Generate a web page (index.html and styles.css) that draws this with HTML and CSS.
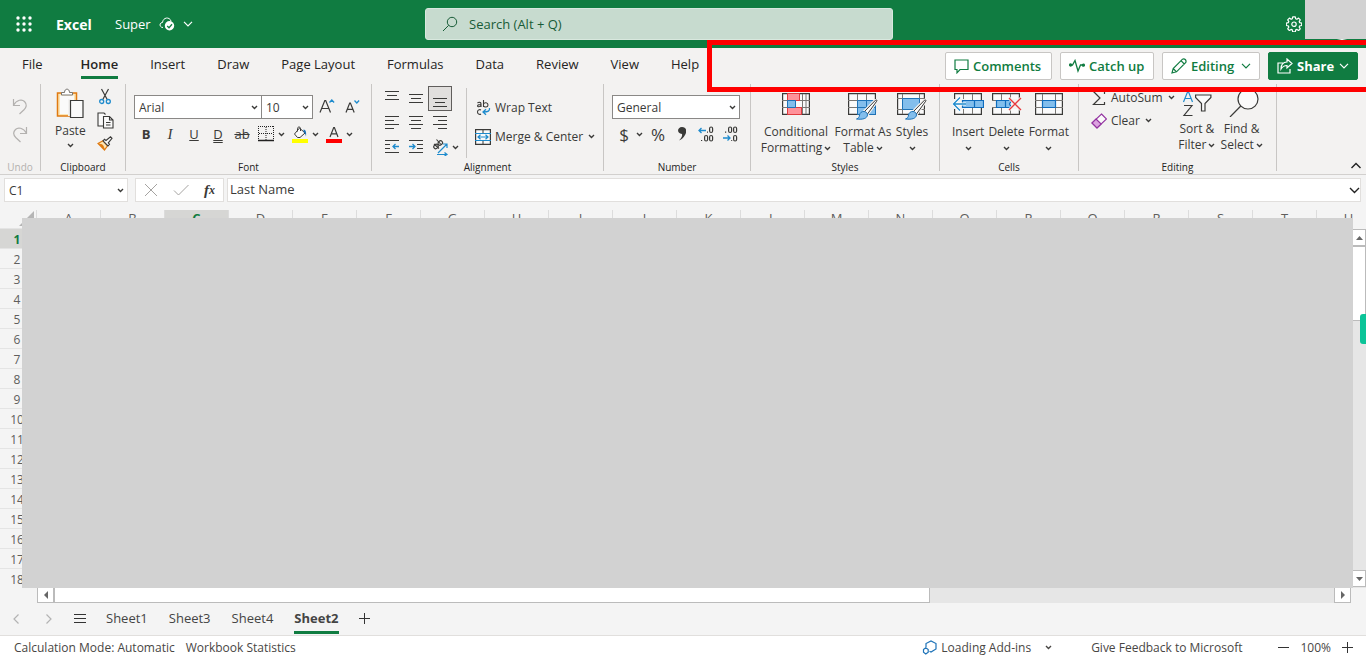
FILE: index.html
```html
<!DOCTYPE html>
<html lang="en">
<head>
<meta charset="utf-8">
<title>Super - Excel</title>
<link rel="stylesheet" href="styles.css">
</head>
<body>
<svg class="defs" aria-hidden="true">
  <symbol id="chev" viewBox="0 0 7 5"><path d="M1 1l2.5 2.5L6 1" fill="none" stroke="currentColor" stroke-width="1.4"/></symbol>
  <symbol id="chev-lg" viewBox="0 0 10 6"><path d="M1 .8l4 4 4-4" fill="none" stroke="currentColor" stroke-width="1.2"/></symbol>
  <symbol id="brush" viewBox="0 0 22 21"><path d="M19.5 1.2c1-.8 1.800 0 1.200 1L11.500 15l-3-2.500z" fill="#fff" stroke="#f3f2f1" stroke-width="3"/><path d="M19.500 1.200c1-.8 1.800 0 1.200 1L11.500 15l-3-2.500z" fill="#fafafa" stroke="#3a3a38"/><path d="M8 12.500c2 .2 3.500 1.600 3.500 3.500-.5 3.500-4.500 4.800-11 4 2.500-1 2.800-2 3-4 .3-2 2-3.700 4.500-3.500z" fill="#83beec" stroke="#1e73b8"/></symbol>
</svg>
<div class="app">
  <header class="topbar">
    <div class="brand">
      <button class="plain waffle" aria-label="App launcher"><svg width="16" height="16" viewBox="0 0 16 16" fill="#fff"><circle cx="2" cy="2" r="1.700"/><circle cx="8" cy="2" r="1.700"/><circle cx="14" cy="2" r="1.700"/><circle cx="2" cy="8" r="1.700"/><circle cx="8" cy="8" r="1.700"/><circle cx="14" cy="8" r="1.700"/><circle cx="2" cy="14" r="1.700"/><circle cx="8" cy="14" r="1.700"/><circle cx="14" cy="14" r="1.700"/></svg></button>
      <a class="app-name" href="#">Excel</a>
      <button class="plain doc-name"><span>Super</span>
        <svg width="16" height="14" viewBox="0 0 16 14"><path d="M4 10.500C.2 10.500 0 5.500 3.500 5.500 4 .2 10.500-.5 12 4" fill="none" stroke="#fff"/><circle cx="10.500" cy="8.800" r="4.700" fill="#fff"/><path d="M8.200 9l1.800 1.700 3-3.400" fill="none" stroke="#107c41" stroke-width="1.300"/></svg>
        <svg width="10" height="6"><use href="#chev-lg"/></svg></button>
    </div>
    <label class="search"><svg width="16" height="16" viewBox="0 0 16 16" fill="none" stroke="#185c37"><circle cx="10" cy="6" r="4.700"/><path d="M6.700 9.300L1 15"/></svg><input type="text" placeholder="Search (Alt + Q)" aria-label="Search"></label>
    <button class="plain gear" aria-label="Settings"><svg width="16" height="16" viewBox="0 0 16 16" fill="none" stroke="#fff" stroke-width="1.200" stroke-linejoin="round"><path d="M6.700.8h2.600l.4 2 1.200.5 1.700-1.200 1.700 1.800-1.100 1.700.5 1.100 2 .4v2.400l-2 .4-.5 1.200 1.100 1.700-1.700 1.700-1.700-1.100-1.200.5-.4 2H6.700l-.4-2-1.200-.5-1.700 1.100-1.700-1.700 1.100-1.700-.5-1.200-2-.4V7.100l2-.4.500-1.100-1.100-1.700 1.700-1.800 1.700 1.200 1.200-.5z"/><circle cx="8" cy="8.200" r="2.200"/></svg></button>
    <div class="avatar"></div>
    <div class="account-cover"></div>
  </header>

  <nav class="menu">
    <div class="tabs">
      <a href="#" class="file">File</a><a href="#" class="active">Home</a><a href="#">Insert</a><a href="#">Draw</a><a href="#">Page Layout</a><a href="#">Formulas</a><a href="#">Data</a><a href="#">Review</a><a href="#">View</a><a href="#">Help</a>
    </div>
    <div class="actions">
      <button class="w-comments"><svg width="15" height="15" viewBox="0 0 15 15" fill="none" stroke="currentColor" stroke-width="1.200"><path d="M1 1h13v9.500H6L3 13.800v-3.300H1z"/></svg>Comments</button>
      <button class="w-catch"><svg width="16" height="14" viewBox="0 0 16 14" fill="none" stroke="currentColor" stroke-width="1.300"><path d="M1.500 6h2L6 1.500 9 12l2.500-6H14"/><circle cx="1.600" cy="6" r="1" fill="currentColor"/><circle cx="14.400" cy="6.200" r="1" fill="currentColor"/></svg>Catch up</button>
      <button class="w-editing"><svg width="16" height="16" viewBox="0 0 16 16" fill="none" stroke="currentColor" stroke-width="1.200"><path d="M1 15l1.200-4.500L11.500 1.200c2-1.200 4.200 1 3.300 3.300L5.500 13.800zM10 2.700L13.300 6M2.200 10.500l3.300 3.300"/></svg>Editing<svg class="end" width="10" height="6"><use href="#chev-lg"/></svg></button>
      <button class="w-share"><svg width="16" height="16" viewBox="0 0 16 16" fill="none" stroke="currentColor" stroke-width="1.200"><path d="M6 5H1v10h12v-4"/><path d="M10 1l5 4.500-5 4.500V7.500c-3 0-4.500 1-6 3.500 0-4 2-7 6-7z"/></svg>Share<svg class="end" width="10" height="6"><use href="#chev-lg"/></svg></button>
    </div>
    <div class="highlight"></div>
  </nav>

  <section class="ribbon" aria-label="Home ribbon">
    <div class="group g-undo">
      <div class="body stack">
        <button class="plain" aria-label="Undo"><svg width="16" height="17" viewBox="0 0 16 17" fill="none" stroke="#b3b1af" stroke-width="1.200"><path d="M1.500 1v6.500H8M1.500 7.300C5 1.500 10 1 12.500 3.500c3 3 1.800 6-.5 8.300L7.500 16"/></svg></button>
        <button class="plain" aria-label="Redo"><svg width="16" height="17" viewBox="0 0 16 17" fill="none" stroke="#b3b1af" stroke-width="1.200"><path d="M14.500 1v6.500H8M14.500 7.300C11 1.500 6 1 3.500 3.500c-3 3-1.800 6 .5 8.300L8.500 16"/></svg></button>
      </div>
      <h2>Undo</h2>
    </div>
    <div class="group g-clip">
      <div class="body">
        <button class="plain big paste"><svg width="28" height="31" viewBox="0 0 28 31"><path d="M1.500 5h19v23h-19z" fill="#fce5b5" stroke="#e07a10" stroke-width="1.500"/><path d="M4 7.500h14V26H4z" fill="#fafafa"/><path d="M5.500 7V4.500h3C8.500 0 13.500 0 13.500 4.500h3V7z" fill="#fff" stroke="#797774"/><path d="M12 11h3v17h-3z" fill="#f3f2f1"/><path d="M14.500 12.500h12.500v17H14.500z" fill="#fafafa" stroke="#3a3a38" stroke-width="1.200"/></svg><span>Paste</span><svg width="7" height="5"><use href="#chev"/></svg></button>
        <div class="stack tools">
          <button class="plain" aria-label="Cut"><svg width="16" height="17" viewBox="0 0 16 17" fill="none"><path d="M4.500 1l6 11M11.500 1l-6 11" stroke="#3a3a38" stroke-width="1.200"/><circle cx="4.700" cy="13.500" r="2" stroke="#1e8bcd" stroke-width="1.300"/><circle cx="11.300" cy="13.500" r="2" stroke="#1e8bcd" stroke-width="1.300"/></svg></button>
          <button class="plain" aria-label="Copy"><svg width="17" height="17" viewBox="0 0 17 17" fill="#fafafa" stroke="#3a3a38" stroke-width="1.100"><path d="M6 14H1V1h6l1.500 1.500"/><path d="M6.500 4.500h6l3.500 3.500v8H6.500zM12.500 4.500V8H16M9 10.500h4.500M9 13h4.500"/></svg></button>
          <button class="plain" aria-label="Format painter"><svg width="16" height="15" viewBox="0 0 16 15"><path d="M1 7.500l5-2.700 4.500 5L7.500 14z" fill="#fce5b5" stroke="#e07a10" stroke-width="1.200"/><path d="M2 8l3.500 1 2 4.500z" fill="#e07a10" stroke="#e07a10"/><path d="M6 4.800l1.500-1.500L9 4.500 13.500.8l1.500 1.500-3.700 4.500 1.200 1.500L11 10z" fill="#fafafa" stroke="#3a3a38" stroke-width="1.100"/></svg></button>
        </div>
      </div>
      <h2>Clipboard</h2>
    </div>
    <div class="group g-font">
      <div class="body stack">
        <div class="row fields">
          <span class="combo f-name"><select aria-label="Font name"><option>Arial</option></select><svg width="7" height="5"><use href="#chev"/></svg></span><span class="combo f-size"><select aria-label="Font size"><option>10</option></select><svg width="7" height="5"><use href="#chev"/></svg></span>
          <button class="plain grow" aria-label="Increase font size"><svg width="16" height="18" viewBox="0 0 16 18" fill="none"><path d="M1 14.500L5.800 2.500h.9l4.800 12M2.700 10.500h7" stroke="#3a3a38" stroke-width="1.200"/><path d="M10.500 4.500L12.800 2l2.300 2.500" stroke="#1e8bcd" stroke-width="1.300"/></svg></button>
          <button class="plain" aria-label="Decrease font size"><svg width="16" height="18" viewBox="0 0 16 18" fill="none"><path d="M2 14.500L5.700 5h.7l3.800 9.500M3.300 11.300h5.500" stroke="#3a3a38" stroke-width="1.200"/><path d="M10.500 2.500L12.800 5l2.300-2.500" stroke="#1e8bcd" stroke-width="1.300"/></svg></button>
        </div>
        <div class="row styles">
          <button class="plain glyph"><b>B</b></button><button class="plain glyph"><i>I</i></button><button class="plain glyph"><u>U</u></button><button class="plain glyph"><span class="dbl">D</span></button><button class="plain glyph"><s>ab</s></button>
          <button class="plain glyph" aria-label="Borders"><svg width="16" height="16" viewBox="0 0 16 16" stroke="#222"><path d="M0 .5h16M.5 0v14M15.500 0v14M8 1v13M1 7.500h14" stroke-dasharray="1 1"/><path d="M0 14.500h16" stroke-width="1.500"/></svg></button><svg width="7" height="5"><use href="#chev"/></svg>
          <button class="plain glyph" aria-label="Fill colour"><svg width="16" height="17" viewBox="0 0 16 17"><path d="M7.500 2L13 7l-5 4.500H5.500L2.500 8z" fill="#fafafa" stroke="#3a3a38"/><path d="M5.500 5.500V2.500c0-2 3-2 3 0V5" fill="none" stroke="#3a3a38"/><path d="M11.500 3.500c2.500 0 3 3 2.500 7-.5-2-1-3.500-2.500-4.500z" fill="#1e73b8"/><path d="M0 13h16v4H0z" fill="#ff0"/></svg></button><svg width="7" height="5"><use href="#chev"/></svg>
          <button class="plain glyph" aria-label="Font colour"><svg width="16" height="17" viewBox="0 0 16 17"><path d="M4 11L7.700 1.500h.7L12 11M5.300 7.800h5.500" fill="none" stroke="#3a3a38" stroke-width="1.200"/><path d="M0 13h16v4H0z" fill="red"/></svg></button><svg width="7" height="5"><use href="#chev"/></svg>
        </div>
      </div>
      <h2>Font</h2>
    </div>
    <div class="group g-align">
      <div class="body">
        <div class="align-grid">
          <button class="plain" aria-label="Top align"><svg width="16" height="16" viewBox="0 0 16 16" stroke="#3a3a38"><path d="M1 .5h14M3 4.500h10M1 8.500h14"/></svg></button>
          <button class="plain" aria-label="Middle align"><svg width="16" height="16" viewBox="0 0 16 16" stroke="#3a3a38"><path d="M1 3.500h14M3 7.500h10M1 11.500h14"/></svg></button>
          <button class="plain pressed" aria-label="Bottom align"><svg width="16" height="16" viewBox="0 0 16 16" stroke="#3a3a38"><path d="M1 7.500h14M3 11.500h10M1 15.500h14"/></svg></button>
          <button class="plain" aria-label="Align left"><svg width="16" height="16" viewBox="0 0 16 16" stroke="#3a3a38"><path d="M1 1.500h14M1 5.500h9M1 9.500h14M1 13.500h9"/></svg></button>
          <button class="plain" aria-label="Centre"><svg width="16" height="16" viewBox="0 0 16 16" stroke="#3a3a38"><path d="M1 1.500h14M3 5.500h10M1 9.500h14M3 13.500h10"/></svg></button>
          <button class="plain" aria-label="Align right"><svg width="16" height="16" viewBox="0 0 16 16" stroke="#3a3a38"><path d="M1 1.500h14M6 5.500h9M1 9.500h14M6 13.500h9"/></svg></button>
          <button class="plain" aria-label="Decrease indent"><svg width="16" height="16" viewBox="0 0 16 16" fill="none"><path d="M1 1.500h14M1 5.500h5M1 9.500h5M1 13.500h14" stroke="#3a3a38"/><path d="M15 7.500H9M11.500 5L9 7.500l2.500 2.500" stroke="#1e8bcd" stroke-width="1.300"/></svg></button>
          <button class="plain" aria-label="Increase indent"><svg width="16" height="16" viewBox="0 0 16 16" fill="none"><path d="M1 1.500h14M9 5.500h6M9 9.500h6M1 13.500h14" stroke="#3a3a38"/><path d="M1 7.500h6M4.500 5L7 7.500 4.500 10" stroke="#1e8bcd" stroke-width="1.300"/></svg></button>
          <button class="plain" aria-label="Orientation"><svg width="17" height="17" viewBox="0 0 17 17" fill="none"><g stroke="#3a3a38" stroke-width="1.100"><ellipse cx="4" cy="7.500" rx="2" ry="2.400" transform="rotate(45 4 7.500)"/><path d="M2 5l5 4.500"/><ellipse cx="8.300" cy="4" rx="2" ry="2.400" transform="rotate(45 8.300 4)"/><path d="M4.500.5l4.500 5"/></g><path d="M6 14L15 5M11 5h4v4M5 15.500h10M12.500 13.500l2.500 2-2.500 1.500" stroke="#1e8bcd" stroke-width="1.200"/></svg></button>
        </div>
        <svg class="orient" width="7" height="5"><use href="#chev"/></svg>
        <div class="stack wrap">
          <button class="plain line"><svg width="16" height="17" viewBox="0 0 16 17" fill="none"><g stroke="#3a3a38" stroke-width="1.100"><path d="M2.500 4c1-1 3.500-1 3.500.7V8M6 5.500C4 5.500 2.500 6 2.500 7S5 8 6 6.500M8.500 1v7M8.500 5c1-2 4.500-1.500 4.500 1s-3.500 2.500-4.500 1M6 11c-1.500-1-3.500 0-3.500 2s2 3 3.500 2"/></g><path d="M14.500 9c.5 3-1.500 4-6 4M11 10.200L8 13l3 2.800" stroke="#1e8bcd" stroke-width="1.300"/></svg>Wrap Text</button>
          <button class="plain line"><svg width="16" height="16" viewBox="0 0 16 16" fill="none"><path d="M.6.600h14.800v14.800H.6z" fill="#fafafa" stroke="#3a3a38" stroke-width="1.200"/><path d="M8 1v3M8 12v3" stroke="#3a3a38"/><path d="M0 4.500h16M0 11.500h16M3 8h10M5.500 5.800L3 8l2.500 2.200M10.500 5.800L13 8l-2.500 2.200" stroke="#1e8bcd" stroke-width="1.200"/></svg>Merge &amp; Center<svg class="after" width="7" height="5"><use href="#chev"/></svg></button>
        </div>
      </div>
      <h2>Alignment</h2>
    </div>
    <div class="group g-number">
      <div class="body stack">
        <div class="row fields"><span class="combo f-num"><select aria-label="Number format"><option>General</option></select><svg width="7" height="5"><use href="#chev"/></svg></span></div>
        <div class="row nums">
          <button class="plain glyph big-glyph">$</button><svg width="7" height="5"><use href="#chev"/></svg><button class="plain glyph big-glyph">%</button>
          <button class="plain glyph" aria-label="Comma style"><svg width="8" height="14" viewBox="0 0 8 14" fill="#3a3a38"><path d="M4 0c5 0 5 5 3 8-1.300 2.500-3 4.500-6 5.500C3.500 11 4.500 9 4 7-1.500 7-1 0 4 0z"/></svg></button>
          <button class="plain glyph" aria-label="Increase decimal"><svg width="16" height="16" viewBox="0 0 16 16" fill="none"><g stroke="#3a3a38" stroke-width="1.200"><rect x="11.600" y="1" width="3" height="5.500" rx="1.500"/><rect x="6.600" y="9.500" width="3" height="5.500" rx="1.500"/><rect x="11.600" y="9.500" width="3" height="5.500" rx="1.500"/><path d="M3 14.500h1.200M9 6.200h1"/></g><path d="M8 4.500H1M3.500 2L1 4.500 3.500 7" stroke="#1e8bcd" stroke-width="1.300"/></svg></button>
          <button class="plain glyph" aria-label="Decrease decimal"><svg width="16" height="16" viewBox="0 0 16 16" fill="none"><g stroke="#3a3a38" stroke-width="1.200"><rect x="6.600" y="1" width="3" height="5.500" rx="1.500"/><rect x="11.600" y="1" width="3" height="5.500" rx="1.500"/><rect x="11.600" y="9.500" width="3" height="5.500" rx="1.500"/><path d="M3 6.200h1.200M9.200 14.500h1"/></g><path d="M1 12h7M5.500 9.500L8 12l-2.500 2.500" stroke="#1e8bcd" stroke-width="1.300"/></svg></button>
        </div>
      </div>
      <h2>Number</h2>
    </div>
    <div class="group g-styles">
      <div class="body">
        <button class="plain big w-cond"><svg width="28" height="28" viewBox="0 0 28 28"><path d="M.6 1.600h26.800v20.800H.6z" fill="#fafafa" stroke="#3a3a38" stroke-width="1.200"/><path d="M0 8.500h28M0 15.500h28M5.500 2v20M20.500 2v20M24 2v20" stroke="#797774"/><path d="M13.500 9h6v6h-6z" fill="#fafafa"/><path d="M5.500 1.500h12v7h-12zM5.500 15.500h14v7h-14z" fill="#ff9199" stroke="#e03a3e"/><path d="M5.500 8.500h8v7h-8z" fill="#83beec" stroke="#1e73b8"/></svg><span>Conditional</span><span>Formatting<svg width="7" height="5"><use href="#chev"/></svg></span></button>
        <button class="plain big w-table"><svg width="32" height="28" viewBox="0 0 32 28"><path d="M1.600 1.600h26.800v20.800H1.600z" fill="#fafafa" stroke="#3a3a38" stroke-width="1.200"/><path d="M1 8.500h28M1 15.500h28M10.500 2v20M19.500 2v20" stroke="#797774"/><path d="M10.500 8.500h18v14h-18zM10.500 15.500h18M19.500 8.500v14" fill="#83beec" stroke="#1e73b8"/><use href="#brush" x="9" y="7" width="22" height="21"/></svg><span>Format As</span><span>Table<svg width="7" height="5"><use href="#chev"/></svg></span></button>
        <button class="plain big w-cell"><svg width="32" height="28" viewBox="0 0 32 28"><path d="M1.600 1.600h26.800v20.800H1.600z" fill="#fafafa" stroke="#3a3a38" stroke-width="1.200"/><path d="M1 6.500h28M1 17.500h28M6.500 2v20M23.500 2v20" stroke="#797774"/><path d="M6.500 6.500h17v11h-17z" fill="#83beec" stroke="#1e73b8"/><use href="#brush" x="9" y="7" width="22" height="21"/></svg><span>Styles</span><span><svg width="7" height="5"><use href="#chev"/></svg></span></button>
      </div>
      <h2>Styles</h2>
    </div>
    <div class="group g-cells">
      <div class="body">
        <button class="plain big"><svg width="32" height="28" viewBox="0 0 32 28"><path d="M2.600 1.600h26.800v20.800H2.600z" fill="#fafafa" stroke="#3a3a38" stroke-width="1.200"/><path d="M11.500 2v20M20.500 2v20M2 8.500h28M2 15.500h28" stroke="#797774"/><path d="M0 7h14v10H0z" fill="#f3f2f1"/><path d="M10.500 8.500h21v7h-21zM22.500 8.500v7" fill="#83beec" stroke="#0f6cbd" stroke-width="1.200"/><path d="M14 12H1.500M8 5.500L1.500 12 8 18.500" fill="none" stroke="#fff" stroke-width="3"/><path d="M14 12H1.500M8 5.500L1.500 12 8 18.500" fill="none" stroke="#1e8bcd" stroke-width="1.300"/></svg><span>Insert</span><span><svg width="7" height="5"><use href="#chev"/></svg></span></button>
        <button class="plain big"><svg width="32" height="28" viewBox="0 0 32 28"><path d="M2.600 1.600h26.800v20.800H2.600z" fill="#fafafa" stroke="#3a3a38" stroke-width="1.200"/><path d="M11.500 2v20M20.500 2v20M2 8.500h28M2 15.500h28" stroke="#797774"/><path d="M0 9h6v6H0zM20 7h12v10H20z" fill="#f3f2f1"/><path d="M6.500 8.500h15l-2 3.500 2 3.500h-15zM15.500 8.500v7" fill="#83beec" stroke="#0f6cbd" stroke-width="1.200"/><path d="M19 6l12 12M31 6L19 18" stroke="#f3f2f1" stroke-width="3"/><path d="M19 6l12 12M31 6L19 18" stroke="#e8383d" stroke-width="1.300"/></svg><span>Delete</span><span><svg width="7" height="5"><use href="#chev"/></svg></span></button>
        <button class="plain big"><svg width="28" height="28" viewBox="0 0 28 28"><path d="M.6 1.600h26.800v20.800H.6z" fill="#fafafa" stroke="#3a3a38" stroke-width="1.200"/><path d="M0 8.500h28M0 15.500h28M7.500 2v20M20.500 2v20" stroke="#797774"/><path d="M7.500 8.500h13v7h-13z" fill="#83beec" stroke="#0f6cbd" stroke-width="1.200"/></svg><span>Format</span><span><svg width="7" height="5"><use href="#chev"/></svg></span></button>
      </div>
      <h2>Cells</h2>
    </div>
    <div class="group g-edit">
      <div class="body">
        <div class="stack sums">
          <button class="plain line"><svg width="16" height="16" viewBox="0 0 16 16" fill="none" stroke="#3a3a38" stroke-width="1.200"><path d="M13.500 4V1.500h-11L9 8l-6.500 6.500h11V12"/></svg>AutoSum<svg class="after" width="7" height="5"><use href="#chev"/></svg></button>
          <button class="plain line"><svg width="16" height="16" viewBox="0 0 16 16" stroke="#9332a0" stroke-width="1.100"><path d="M10.500 1l5 5L6 15 1 10z" fill="#fafafa"/><path d="M5 6l5.200 5L6 15 1 10z" fill="#dca3e0"/></svg>Clear<svg class="after" width="7" height="5"><use href="#chev"/></svg></button>
        </div>
        <button class="plain big finder"><svg width="30" height="28" viewBox="0 0 30 28" fill="none"><path d="M1.500 13L5.700 2.500h.7l4.100 10.500M3 9.500h6" stroke="#1e8bcd" stroke-width="1.200"/><path d="M2 16.500h8l-8 10h8.500" stroke="#3a3a38" stroke-width="1.200"/><path d="M13.600 6h15.300v2.500L23 14.500V22h-3.500v-7.500l-5.900-6z" fill="#fafafa" stroke="#3a3a38" stroke-width="1.200"/></svg><span>Sort &amp;</span><span>Filter<svg width="7" height="5"><use href="#chev"/></svg></span></button>
        <button class="plain big finder"><svg width="34" height="28" viewBox="0 0 34 28" fill="#fafafa" stroke="#3a3a38" stroke-width="1.200"><circle cx="23" cy="10" r="10"/><path d="M15.800 17L5 28"/></svg><span>Find &amp;</span><span>Select<svg width="7" height="5"><use href="#chev"/></svg></span></button>
      </div>
      <h2>Editing</h2>
    </div>
    <button class="plain collapse" aria-label="Collapse ribbon"><svg width="12" height="7" viewBox="0 0 12 7"><path d="M1.500 6L6 1.500 10.500 6" fill="none" stroke="#222" stroke-width="1.400"/></svg></button>
  </section>

  <section class="formula-bar">
    <span class="combo name-box"><select aria-label="Name box"><option>C1</option></select><svg width="7" height="5"><use href="#chev"/></svg></span>
    <div class="fx">
      <button class="plain" aria-label="Cancel"><svg width="14" height="14" viewBox="0 0 14 14" stroke="#a5a3a1"><path d="M1 1l12 12M13 1L1 13"/></svg></button>
      <button class="plain" aria-label="Enter"><svg width="16" height="12" viewBox="0 0 16 12" fill="none" stroke="#a5a3a1"><path d="M1 6.500L5.500 11 15.500 1"/></svg></button>
      <button class="plain fn" aria-label="Insert function">f<sub>x</sub></button>
    </div>
    <label class="formula"><input type="text" value="Last Name" aria-label="Formula bar"><svg width="11" height="7" viewBox="0 0 11 7"><path d="M1 1l4.500 4.500L10 1" fill="none" stroke="#222" stroke-width="1.400"/></svg></label>
  </section>

  <main class="sheet">
    <div class="grid">
      <div class="cols">
        <div class="corner"><svg width="16" height="16" viewBox="0 0 16 16"><path d="M15 0v15H0z" fill="#b5b5b5"/></svg></div>
        <div class="col">A</div><div class="col">B</div><div class="col current">C</div><div class="col">D</div><div class="col">E</div><div class="col">F</div><div class="col">G</div><div class="col">H</div><div class="col">I</div><div class="col">J</div><div class="col">K</div><div class="col">L</div><div class="col">M</div><div class="col">N</div><div class="col">O</div><div class="col">P</div><div class="col">Q</div><div class="col">R</div><div class="col">S</div><div class="col">T</div><div class="col">U</div>
      </div>
      <div class="rows">
        <div class="current">1</div><div>2</div><div>3</div><div>4</div><div>5</div><div>6</div><div>7</div><div>8</div><div>9</div><div>10</div><div>11</div><div>12</div><div>13</div><div>14</div><div>15</div><div>16</div><div>17</div><div>18</div>
      </div>
      <div class="cover"></div>
    </div>
    <div class="vscroll">
      <button class="plain" aria-label="Scroll up"><svg width="7" height="4"><path d="M0 4L3.500 0 7 4z" fill="#666"/></svg></button>
      <div class="thumb"></div>
      <button class="plain down" aria-label="Scroll down"><svg width="7" height="4"><path d="M0 0l3.500 4L7 0z" fill="#666"/></svg></button>
    </div>
    <div class="side-tab"></div>
  </main>
  <div class="hscroll">
    <button class="plain" aria-label="Scroll left"><svg width="4" height="8"><path d="M4 0L0 4l4 4z" fill="#666"/></svg></button>
    <div class="thumb"></div>
    <button class="plain right" aria-label="Scroll right"><svg width="4" height="8"><path d="M0 0l4 4-4 4z" fill="#666"/></svg></button>
  </div>

  <nav class="sheets">
    <button class="plain arrow" aria-label="Previous sheet"><svg width="6" height="10" viewBox="0 0 6 10"><path d="M5.500.500L1 5l4.500 4.500" fill="none" stroke="#b3b3b3" stroke-width="1.200"/></svg></button>
    <button class="plain arrow" aria-label="Next sheet"><svg width="6" height="10" viewBox="0 0 6 10"><path d="M.5.500L5 5 .5 9.500" fill="none" stroke="#b3b3b3" stroke-width="1.200"/></svg></button>
    <button class="plain list" aria-label="All sheets"><svg width="12" height="10" viewBox="0 0 12 10" stroke="#333"><path d="M0 .5h12M0 4.500h12M0 8.500h12"/></svg></button>
    <a href="#">Sheet1</a><a href="#">Sheet3</a><a href="#">Sheet4</a><a href="#" class="active">Sheet2</a>
    <button class="plain" aria-label="New sheet"><svg width="11" height="11" viewBox="0 0 11 11" stroke="#333"><path d="M5.500 0v11M0 5.500h11"/></svg></button>
  </nav>

  <footer class="status">
    <span>Calculation Mode: Automatic</span><span>Workbook Statistics</span>
    <button class="plain addins"><svg width="15" height="15" viewBox="0 0 15 15" fill="none" stroke="#1e73b8" stroke-width="1.200"><path d="M4 7V3.500L9 1l5 2.500V9l-5 3-1.500-.7"/><path d="M1.500 9.500l2.300-1.700 2.400 1.700v2.700L3.800 14l-2.300-1.800z"/></svg>Loading Add-ins<svg class="after" width="7" height="5"><use href="#chev"/></svg></button>
    <a href="#">Give Feedback to Microsoft</a>
    <button class="plain minus" aria-label="Zoom out"><svg width="11" height="11" viewBox="0 0 11 11" stroke="#333"><path d="M0 5.500h11"/></svg></button>
    <span>100%</span>
    <button class="plain" aria-label="Zoom in"><svg width="11" height="11" viewBox="0 0 11 11" stroke="#333"><path d="M5.500 0v11M0 5.500h11"/></svg></button>
  </footer>
</div>
</body>
</html>
```
FILE: styles.css
```css
* { box-sizing: border-box; }
body { margin: 0; font-family: "Open Sans", "Noto Sans", sans-serif; font-size: 12px; color: #3a3a38; }
a { color: inherit; text-decoration: none; }
svg { display: block; flex: none; }
.defs { position: absolute; width: 0; height: 0; }
button, input, select { font: inherit; color: inherit; }
.plain { background: none; border: 0; padding: 0; margin: 0; display: flex; align-items: center; justify-content: center; white-space: nowrap; }
.app { min-height: 100vh; display: flex; flex-direction: column; background: #f4f4f4; overflow: hidden; }

/* Title bar */
.topbar { position: relative; height: 48px; background: #107c41; color: #fff; display: flex; align-items: center; }
.brand { flex: 0 0 425px; display: flex; align-items: center; padding-left: 16px; }
.app-name { font-size: 14px; font-weight: 700; margin-left: 24px; width: 59px; }
.doc-name { font-size: 13px; gap: 8px; }
.search { flex: 0 1 468px; height: 32px; background: #c7dbcf; border: 1px solid #d8e8de; border-radius: 3px; display: flex; align-items: center; gap: 11px; padding-left: 16px; }
.search input { flex: 1; min-width: 0; border: 0; background: none; padding: 0; font-size: 13px; outline: 0; }
.search input::placeholder { color: #185c37; opacity: 1; }
.gear { margin-left: auto; margin-right: 64px; }
.avatar { position: absolute; top: 8px; right: 8px; width: 32px; height: 32px; border: 1px solid #fff; border-radius: 50%; }
.account-cover { position: absolute; top: 0; right: 0; width: 61px; height: 39px; background: #d2d2d2; }

/* Menu tabs */
.menu { position: relative; height: 36px; background: #f3f2f1; display: flex; justify-content: space-between; }
.tabs { display: flex; padding-left: 22px; gap: 32px; font-size: 13px; color: #252423; }
.tabs a { height: 31px; line-height: 32px; border-bottom: 3px solid transparent; white-space: nowrap; }
.tabs .file { margin-right: 6px; }
.tabs .active { font-weight: 600; border-color: #107c41; }
.actions { display: flex; gap: 8px; padding: 4px 8px 4px 0; }
.actions button { height: 28px; border: 1px solid #c8c6c4; border-radius: 2px; background: #fff; color: #107c41; font-size: 13px; font-weight: 600; padding: 0 8px; display: flex; align-items: center; gap: 4px; white-space: nowrap; }
.actions .end { margin-left: auto; }
.w-comments { width: 107px; }
.w-catch { width: 94px; }
.w-editing { width: 98px; }
.actions .w-share { width: 90px; background: #107c41; border-color: #107c41; color: #fff; font-weight: 700; }
.highlight { position: absolute; z-index: 3; top: -8px; right: -8px; width: 667px; height: 52px; border: 5px solid #f00; pointer-events: none; }

/* Ribbon */
.ribbon { height: 91px; background: #f3f2f1; border-bottom: 1px solid #d2d0ce; display: flex; }
.group { height: 87px; border-right: 1px solid #c8c6c4; display: flex; flex-direction: column; flex: none; }
.body { flex: 1; display: flex; }
.stack { display: flex; flex-direction: column; align-items: flex-start; }
.row { display: flex; align-items: center; }
.group h2 { margin: 0; font-size: 10px; font-weight: 400; line-height: 8px; height: 8px; text-align: center; color: #252423; }
.g-undo { width: 41px; }
.g-undo .body { align-items: center; padding-top: 14px; gap: 11px; }
.g-undo h2 { color: #b3b1af; }
.g-clip { width: 85px; }
.g-clip .body { padding: 4px 0 0 14px; gap: 11px; }
.tools { gap: 7px; align-items: center; }
.big { flex-direction: column; justify-content: flex-start; line-height: 16px; }
.big > span { display: flex; align-items: center; justify-content: center; gap: 2px; height: 16px; }
.paste > span { height: 24px; }
.g-font { width: 246px; }
.g-font .body { padding: 11px 0 0 8px; gap: 6px; }
.combo { position: relative; display: block; height: 24px; }
.combo select { appearance: none; width: 100%; height: 100%; border: 1px solid #8a8886; border-radius: 0; background: #fff; padding: 0 4px; outline: 0; }
.combo svg { position: absolute; right: 4px; top: 10px; pointer-events: none; }
.f-name { width: 128px; }
.f-size { width: 51px; }
.f-size select { border-left: 0; }
.f-num { width: 128px; }
.grow { margin: 0 9px 0 6px; }
.glyph { width: 24px; height: 18px; font-size: 13px; }
.glyph i { font-family: "Liberation Serif", serif; font-size: 15px; }
.dbl { text-decoration: underline double; }
.styles svg + .glyph { margin-left: 3px; }
.g-align { width: 232px; }
.align-grid { display: grid; grid-template-columns: repeat(3, 24px); grid-template-rows: 25px 24px 24px; margin: 2px 0 0 8px; align-self: flex-start; }
.pressed { background: #e1dfdd; border: 1px solid #605e5c; }
.orient { margin: 61px 7px 0 0; }
.wrap { border-left: 1px solid #c8c6c4; margin: 4px 0 5px; padding: 11px 0 0 8px; gap: 12px; }
.line { gap: 4px; line-height: 17px; }
.after { margin-left: 1px; }
.g-number { width: 147px; }
.g-number .body { padding: 11px 0 0 8px; gap: 6px; }
.big-glyph { font-size: 17px; }
.nums > svg { margin-right: 3px; }
.g-styles { width: 189px; }
.g-styles .body { padding: 8px 0 0 10px; }
.w-cond { width: 70px; }
.w-table { width: 64px; }
.w-cell { width: 34px; }
.g-styles .big > svg, .g-cells .big > svg { margin-bottom: 4px; }
.g-cells { width: 139px; }
.g-cells .body { padding: 8px 9px 0 12px; justify-content: space-between; }
.g-edit { width: 198px; }
.g-edit .body { padding: 5px 12px 0 12px; }
.sums { gap: 6px; flex: 1; }
.finder { width: 46px; }
.finder > svg { margin-bottom: 4px; }
.collapse { margin: auto 4px 5px auto; }

/* Formula bar */
.formula-bar { height: 35px; padding: 3px 5px 8px 4px; display: flex; }
.name-box { width: 124px; margin-right: 7px; }
.name-box select, .fx, .formula { border: 1px solid #e1dfdd; }
.fx { width: 89px; background: #fff; display: flex; justify-content: space-between; padding: 0 8px; margin-right: 3px; }
.fn { font: italic 700 15px "Liberation Serif", serif; }
.fn sub { font-size: 12px; line-height: 1; }
.formula { flex: 1; background: #fff; display: flex; align-items: center; padding: 0 0 0 2px; }
.formula input { flex: 1; min-width: 0; height: 22px; border: 0; background: none; outline: 0; padding: 0 0 2px; font-size: 13px; }

/* Worksheet */
.sheet { position: relative; flex: 1; display: flex; min-height: 377px; }
.grid { position: relative; flex: 1; min-width: 0; overflow: hidden; }
.cols { display: flex; height: 18px; line-height: 17px; font-size: 13px; color: #605e5c; }
.corner { flex: 0 0 37px; border-right: 1px solid #dcdcdc; padding: 1px 0 0 19px; }
.col { flex: 0 0 64px; text-align: center; border-right: 1px solid #dcdcdc; }
.cols .current, .rows .current { background: #d6d6d4; color: #107c41; font-weight: 700; }
.rows { width: 37px; font-size: 12px; color: #605e5c; }
.rows div { height: 20px; line-height: 22px; border-top: 1px solid #e4e4e4; padding-right: 3px; text-align: center; }
.cover { position: absolute; inset: 8px 0 0 22px; background: #d2d2d2; }
.vscroll { width: 13px; margin-top: 19px; background: #e6e6e6; display: flex; flex-direction: column; }
.vscroll button, .hscroll button { background: #fff; border: 1px solid #bbb; }
.vscroll button { height: 17px; border-left: 0; }
.vscroll .thumb { height: 75px; background: #fff; border: solid #bbb; border-width: 1px 1px 1px 0; }
.vscroll .down { margin-top: auto; margin-bottom: 1px; }
.side-tab { position: absolute; right: 0; top: 104px; width: 6px; height: 30px; background: #0bc498; border-radius: 3px 0 0 3px; }
.hscroll { height: 15px; margin: 0 15px 0 37px; background: #e6e6e6; display: flex; }
.hscroll button { width: 17px; border-top: 0; }
.hscroll .thumb { width: calc(200% / 3); background: #fff; border: 1px solid #bbb; border-top: 0; }
.hscroll .right { margin-left: auto; }

/* Sheet tabs */
.sheets { height: 32px; display: flex; align-items: center; padding: 0 0 1px 13px; font-size: 13px; color: #444; }
.sheets .arrow { margin-right: 27px; }
.sheets .arrow + .arrow { margin-right: 22px; }
.sheets .list { margin-right: 20px; }
.sheets a { height: 31px; line-height: 30px; margin-right: 21px; }
.sheets .active { font-weight: 700; border-bottom: 3px solid #107c41; margin-right: 20px; }

/* Status bar */
.status { height: 23px; background: #fff; border-top: 1px solid #e1dfdd; display: flex; align-items: center; padding: 1px 13px 0 14px; gap: 11px; color: #484644; white-space: nowrap; }
.addins { margin-left: auto; margin-right: 28px; gap: 4px; }
.addins .after { margin-left: 10px; }
.minus { margin-left: 25px; }
```
